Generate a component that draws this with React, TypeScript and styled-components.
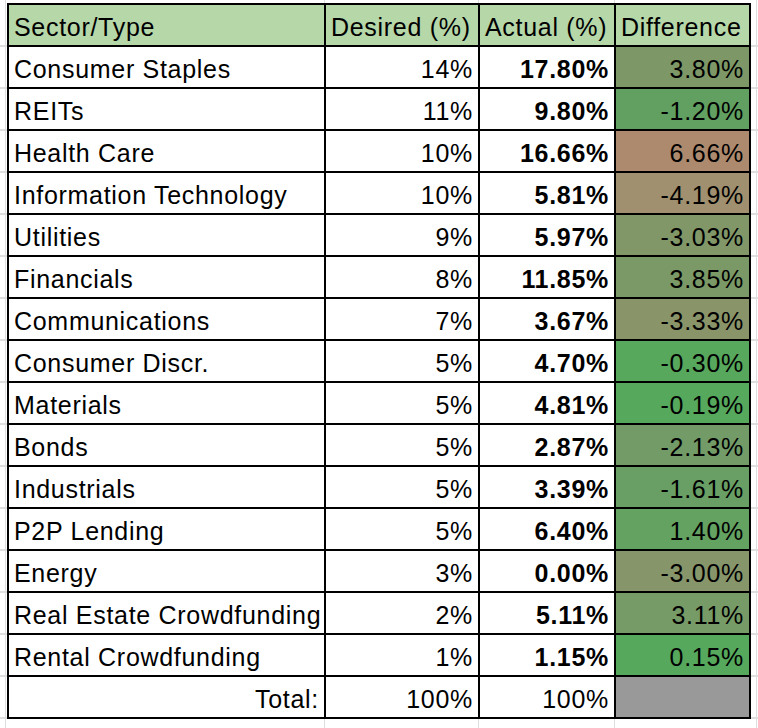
import React from 'react';
import styled, { createGlobalStyle } from 'styled-components';

const GlobalStyle = createGlobalStyle`
    html, body {
        margin: 0;
        padding: 0;
        background: #fff;
    }
`;

const GRID = '#dedede';

const Sheet = styled.div`
    width: 758px;
    height: 728px;
    overflow: hidden;
    background-color: #fff;
    background-image:
        linear-gradient(
            to right,
            transparent 5px,
            ${GRID} 5px 6px,
            transparent 6px 324px,
            ${GRID} 324px 325px,
            transparent 325px 478px,
            ${GRID} 478px 479px,
            transparent 479px 614px,
            ${GRID} 614px 615px,
            transparent 615px 756px,
            ${GRID} 756px 757px,
            transparent 757px
        ),
        repeating-linear-gradient(
            to bottom,
            transparent 0 40px,
            ${GRID} 40px 42px
        );
    background-position: 0 0, 0 5px;
    padding-top: 3px;
    padding-left: 7px;
    box-sizing: border-box;
    font-family: 'Liberation Sans', Arial, sans-serif;
    font-size: 25px;
    letter-spacing: 0.7px;
    color: #000;
`;

const Table = styled.div`
    display: grid;
    grid-template-columns: 315px 152px 134px 133px;
    grid-auto-rows: 40px;
    gap: 2px;
    padding: 2px;
    width: max-content;
    background: #000;
`;

const Cell = styled.div<{ $bg?: string; $align?: 'left' | 'right'; $bold?: boolean }>`
    background: ${(p) => p.$bg || '#fff'};
    text-align: ${(p) => p.$align || 'left'};
    font-weight: ${(p) => (p.$bold ? 700 : 400)};
    padding: 5px 5px 0 5px;
    line-height: 35px;
    white-space: nowrap;
    overflow: hidden;
`;

const HEADER_BG = '#b6d7a8';

const rows: [string, string, string, string, string][] = [
    ['Consumer Staples', '14%', '17.80%', '3.80%', '#7d9866'],
    ['REITs', '11%', '9.80%', '-1.20%', '#61a061'],
    ['Health Care', '10%', '16.66%', '6.66%', '#ad8a6d'],
    ['Information Technology', '10%', '5.81%', '-4.19%', '#a0906f'],
    ['Utilities', '9%', '5.97%', '-3.03%', '#819768'],
    ['Financials', '8%', '11.85%', '3.85%', '#7b9966'],
    ['Communications', '7%', '3.67%', '-3.33%', '#8a9469'],
    ['Consumer Discr.', '5%', '4.70%', '-0.30%', '#57a75c'],
    ['Materials', '5%', '4.81%', '-0.19%', '#56a85c'],
    ['Bonds', '5%', '2.87%', '-2.13%', '#729b68'],
    ['Industrials', '5%', '3.39%', '-1.61%', '#699f65'],
    ['P2P Lending', '5%', '6.40%', '1.40%', '#64a262'],
    ['Energy', '3%', '0.00%', '-3.00%', '#87956a'],
    ['Real Estate Crowdfunding', '2%', '5.11%', '3.11%', '#779b67'],
    ['Rental Crowdfunding', '1%', '1.15%', '0.15%', '#56a85c'],
];

export default function App() {
    return (
        <>
            <GlobalStyle />
            <Sheet>
                <Table>
                    <Cell $bg={HEADER_BG}>Sector/Type</Cell>
                    <Cell $bg={HEADER_BG}>Desired (%)</Cell>
                    <Cell $bg={HEADER_BG}>Actual (%)</Cell>
                    <Cell $bg={HEADER_BG}>Difference</Cell>
                    {rows.map(([name, desired, actual, diff, color]) => (
                        <React.Fragment key={name}>
                            <Cell>{name}</Cell>
                            <Cell $align={'right'}>{desired}</Cell>
                            <Cell $align={'right'} $bold>
                                {actual}
                            </Cell>
                            <Cell $align={'right'} $bg={color}>
                                {diff}
                            </Cell>
                        </React.Fragment>
                    ))}
                    <Cell $align={'right'}>Total:</Cell>
                    <Cell $align={'right'}>100%</Cell>
                    <Cell $align={'right'}>100%</Cell>
                    <Cell $bg={'#999999'} />
                </Table>
            </Sheet>
        </>
    );
}
